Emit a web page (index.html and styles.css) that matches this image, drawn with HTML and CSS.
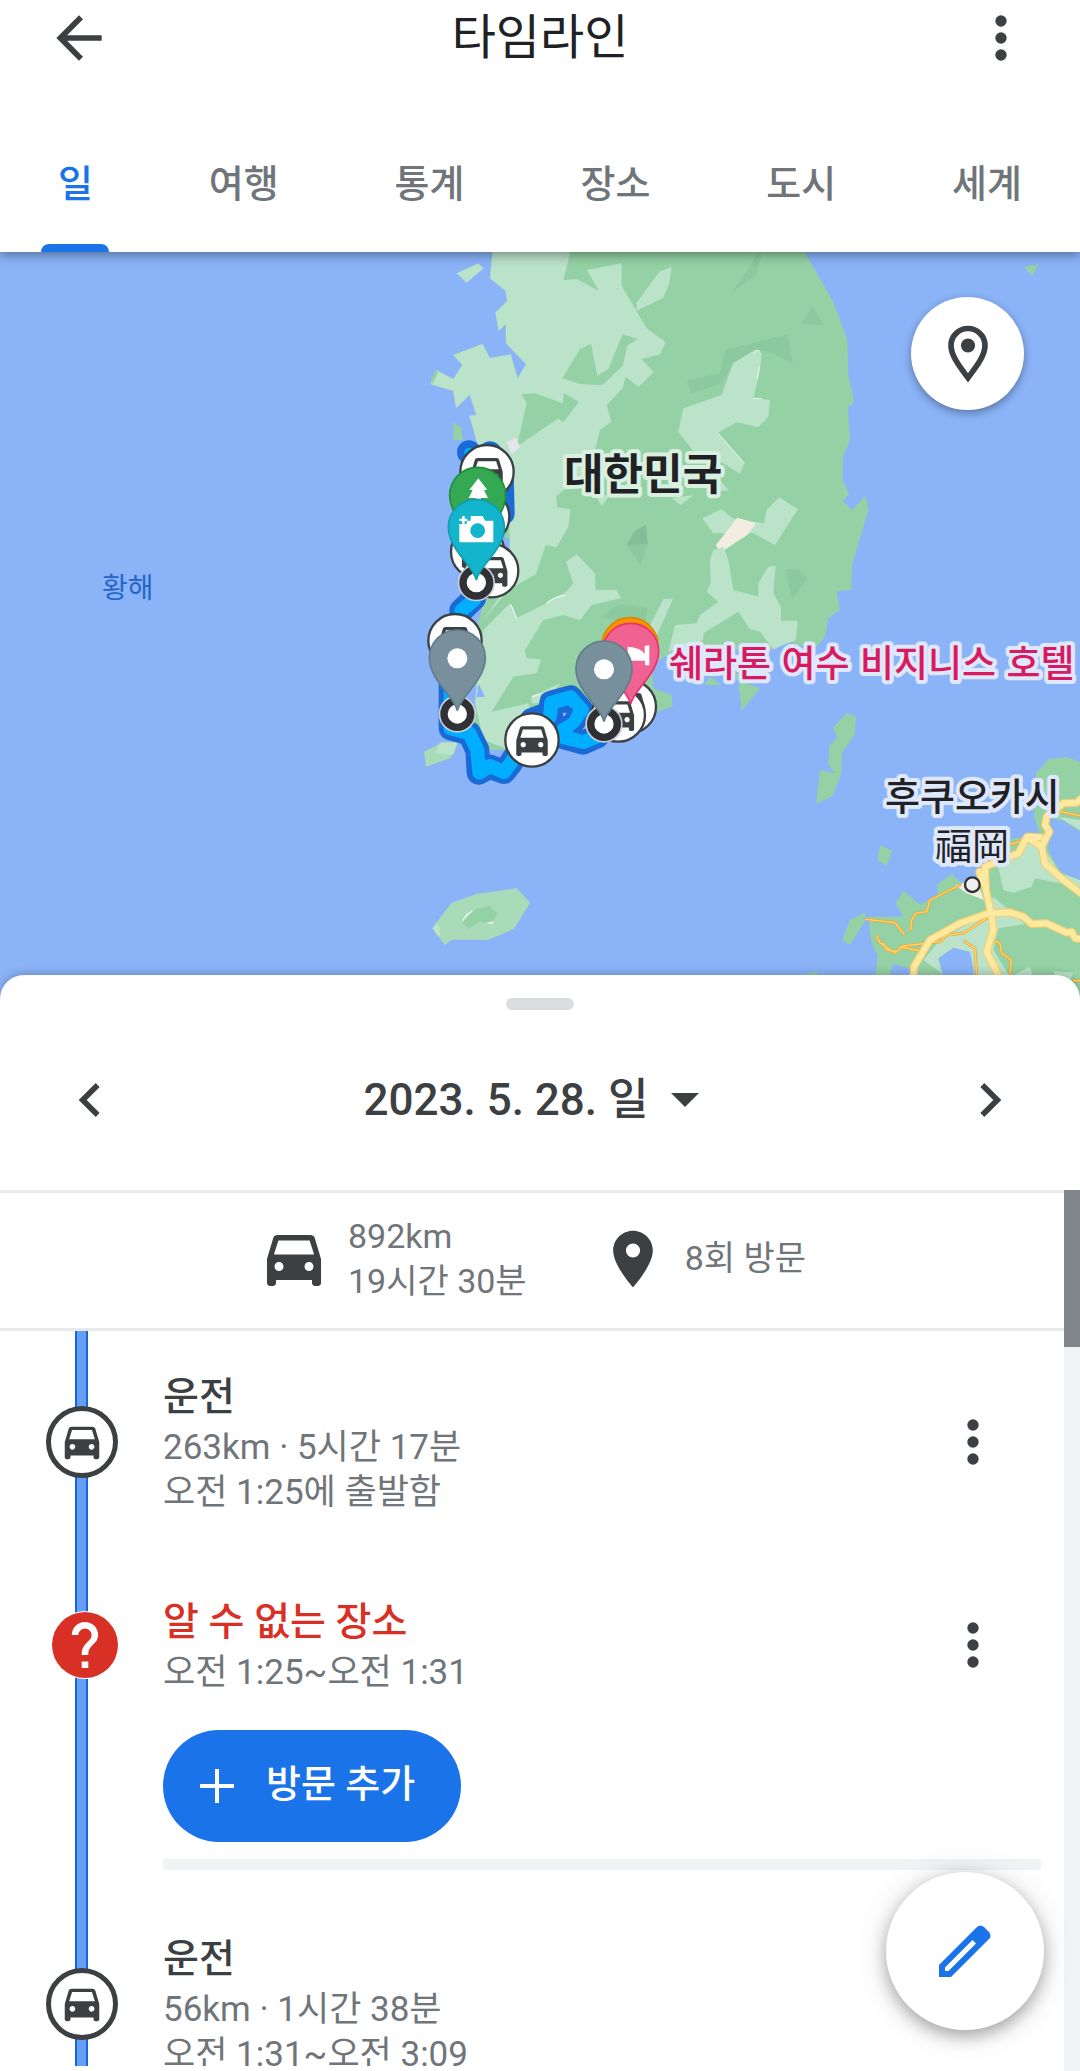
FILE: index.html
```html
<!DOCTYPE html>
<html lang="ko">
<head>
<meta charset="utf-8">
<meta name="viewport" content="width=device-width, initial-scale=1">
<title>타임라인</title>
<link rel="stylesheet" href="styles.css">
</head>
<body>
<svg class="defs" aria-hidden="true">
  <symbol id="car" viewBox="0 0 24 24"><path d="M18.92 5.010C18.720 4.420 18.160 4 17.500 4h-11c-.66 0-1.210.42-1.420 1.010L3 12v8c0 .55.45 1 1 1h1c.55 0 1-.45 1-1v-1h12v1c0 .55.45 1 1 1h1c.55 0 1-.45 1-1v-8zM7 16c-.83 0-1.500-.67-1.500-1.500S6.170 13 7 13s1.500.67 1.500 1.500S7.830 16 7 16zm10 0c-.83 0-1.500-.67-1.500-1.500s.67-1.500 1.500-1.500 1.500.67 1.500 1.500-.67 1.500-1.500 1.500zM5.300 10.500l1.500-4.700h10.400l1.500 4.700z"/></symbol>
  <symbol id="more" viewBox="0 0 24 24"><circle cx="12" cy="6" r="2"/><circle cx="12" cy="12" r="2"/><circle cx="12" cy="18" r="2"/></symbol>
</svg>
<div class="app">
  <header class="top">
    <div class="bar">
      <button class="icon-btn" aria-label="뒤로"><svg class="icon" viewBox="0 0 24 24"><path d="M20 11H7.83l5.59-5.59L12 4l-8 8 8 8 1.41-1.41L7.83 13H20v-2z"/></svg></button>
      <h1 class="title">타임라인</h1>
      <button class="icon-btn" aria-label="메뉴"><svg class="icon"><use href="#more"/></svg></button>
    </div>
    <nav class="tabs">
      <a class="tab tab-on" href="#day">일</a>
      <a class="tab" href="#trips">여행</a>
      <a class="tab" href="#stats">통계</a>
      <a class="tab" href="#places">장소</a>
      <a class="tab" href="#cities">도시</a>
      <a class="tab" href="#world">세계</a>
    </nav>
  </header>

  <section class="map">
    <svg class="map-art" viewBox="0 252 1080 780" preserveAspectRatio="xMidYMin slice">
      <defs>
        <g id="pin"><path d="M0 158C-8 116-84 66-84 0A84 84 0 0 1 84 0C84 66 8 116 0 158z" stroke-width="5"/></g>
        <g id="stop"><circle r="80" fill="#fff" stroke="#3c4043" stroke-width="7"/><use href="#car" x="-63" y="-62" width="126" height="126" fill="#3c4043"/></g>
        <g id="ring"><circle r="56" fill="#c9cfd6"/><circle r="40" fill="#fff" stroke="#303134" stroke-width="22"/></g>
      </defs>
      <rect y="252" width="1080" height="780" fill="#8ab3f8"/>
      <!-- peninsula -->
      <g transform="translate(400 250) scale(.33333)">
        <path fill="#94d2a5" d="M278 0L270 85 316 122 322 152 286 188 296 243 317 222 318 280 378 342 353 386 332 313 270 324 247 282 160 315 187 345 160 387 108 360 92 403 160 423 168 475 209 434 229 495 208 497 235 590 320 700 315 860 330 870 330 960 250 1060 225 1150 215 1290 252 1340 210 1400 200 1460 250 1500 340 1500 400 1420 600 1400 770 1385 818 1370 815 1335 760 1315 755 1245 830 1198 905 1200 930 1280 965 1305 915 1305 960 1230 1010 1290 1080 1315 1025 1382 1015 1290 1000 1200 1120 1198 1170 1170 1185 1185 1250 1190 1275 1160 1285 1105 1320 1080 1310 1023 1355 1020 1356 945 1405 780 1397 738 1356 780 1328 752 1348 732 1327 690 1330 615 1350 572 1344 472 1363 455 1345 375 1342 270 1300 155 1210 0z"/>
        <path fill="#bbe3c9" d="M278 0L512 0 490 90 530 88 597 122 560 60 665 40 665 108 740 235 797 277 780 313 725 327 761 367 715 411 677 380 668 415 620 465 634 515 600 540 585 600 590 690 490 720 468 740 472 772 512 778 505 830 470 892 437 885 408 972 325 1020 250 1110 320 1010 330 870 320 700 235 590 208 497 229 495 209 434 168 475 160 423 92 403 108 360 160 387 187 345 160 315 247 282 270 324 332 313 353 386 378 342 318 280 317 222 296 243 286 188 322 152 316 122 270 85zM815 50L808 100 790 143 710 182 710 158 778 65zM1068 298L1000 338 965 435 850 475 835 545 885 610 970 640 1020 671 1033 640 953 548 1010 517 1075 532 1105 500 1110 450 1060 445 1075 385 1085 320zM585 735L630 735 605 767zM815 745L880 735 842 765zM960 690L987 722 950 722zM907 805L965 778 998 805 1092 820 1100 780 1138 742 1193 778 1125 885 1060 850 940 850zM170 70L235 40 250 55 200 98z"/>
        <path fill="#94d2a5" d="M487 385L540 297 573 281 592 377 625 358 668 252 715 268 683 285 668 348 607 406 540 402zM365 433L405 430 488 460 492 430 537 455 490 517 475 505 350 590 380 460zM160 517L185 535 188 570 160 570zM108 360L92 390 98 402 115 365z"/>
        <path fill="#8bc99e" d="M1238 165L1270 227 1205 220zM860 392L960 370 975 300 1163 253 1178 343 1120 310 1068 298 1000 338 965 400 875 430zM1085 10L1070 75 995 127 1050 50 1070 10zM1158 957L1195 957 1223 987 1175 1048zM680 885L743 882 722 945zM600 1100L660 1062 742 1075 735 1130z"/>
        <path fill="#83be98" d="M738 823L743 882 680 885 705 842z"/>
        <path fill="#f2ede0" d="M1012 803L1068 820 1042 855 960 908 948 885z"/>
        <path fill="#e4e4ea" d="M320 575L350 563 360 592 335 612z"/>
        <path fill="none" stroke="#eef5ef" stroke-width="3" d="M953 548L1033 640M1060 310L1075 300 1083 315M1060 445L1085 446M1078 350L1072 385"/>
      </g>
      <g transform="translate(520 560) scale(.33333)" fill="#bbe3c9">
        <path d="M570 0L580-30 610-40 625 0 640 90 715 110 715 70 745 20 767 18 760 100 783 140 783 182 833 182 828 240 760 268 720 215 690 208 655 155 550 220 550 240 445 275 465 195 530 190 540 165 595 125 560 95 572 70zM430 118L460 115 400 250 380 215z"/>
      </g>
      <g transform="translate(400 420) scale(.33333)">
        <path fill="#bbe3c9" d="M250 630L330 550 350 595 440 550 490 525 520 490 498 425 530 403 585 460 587 510 650 510 663 535 575 555 540 600 490 585 430 600 375 690 380 715 423 718 410 760 340 770 275 875 385 850 400 900 330 990 250 960 225 850 240 700zM395 830L480 790 440 850 395 850z"/>
        <path fill="#a9dbb8" d="M72 995L130 965 175 965 150 1015 78 1040z"/>
        <path fill="#bbe3c9" d="M120 968L172 968 160 1005 105 1000z"/>
        <path fill="#8ab3f8" d="M235 790L255 830 230 832z"/>
        <path fill="none" stroke="#eef5ef" stroke-width="4" d="M333 555L350 595M440 550Q465 530 495 525M395 830L420 822"/>
      </g>
      <!-- islands -->
      <path fill="#94d2a5" d="M1024 267L1039 264 1032 276z"/>
      <g transform="translate(400 780) scale(.33333)">
        <path fill="#a9dbb8" d="M97 445L155 368 230 342 350 325 390 368 342 447 265 479 155 479 135 495z"/>
        <path fill="#bbe3c9" d="M97 445L110 428 120 440 120 465 113 468z"/>
        <path fill="#94d2a5" d="M187 428L220 390 268 377 293 400 275 432 240 425 205 447z"/>
        <path fill="#eef5ef" d="M185 428Q195 395 225 390 205 400 185 428zM255 430L278 432 280 424z"/>
      </g>
      <!-- kyushu -->
      <g transform="translate(780 650) scale(.33333)">
        <path fill="#94d2a5" d="M200 190L228 198 224 255 187 305 183 373 158 437 108 463 120 360 165 370 145 345 148 288 172 262 158 235zM300 585L337 603 320 648 293 630zM255 787L257 810 210 885 187 870 210 810zM900 335L858 320 805 328 768 370 762 500 780 555 700 565 620 640 600 690 545 700 515 672 470 705 475 740 418 762 370 722 347 760 370 800 265 800 275 880 293 915 285 1000 700 1000 900 1120zM75 973L113 964 105 985z"/>
        <path fill="#bbe3c9" d="M655 650L740 580 790 590 840 670 900 690 900 712 765 685 755 710 700 728 670 720zM430 930L480 870 620 790 640 740 735 822 655 835 640 900 690 980 500 980zM700 975L750 950 760 980zM820 963L880 968 870 990 830 985zM835 500L900 510 900 540z"/>
        <path fill="#f2ede0" d="M525 705L590 690 612 750 560 730z"/>
        <path fill="#8ab3f8" d="M810 505L850 512 900 545 900 690 840 665 805 600zM475 925L520 893 570 905 585 980 490 980zM340 940L385 955 410 980 330 975z"/>
        <g fill="none" stroke-linejoin="round" stroke-linecap="round">
          <path stroke="#eba93a" stroke-width="9" d="M540 705L450 750 440 785 408 790 395 810 392 840M260 808L345 818 372 852M290 858L300 878 345 910 370 888 480 875 500 855 550 850 620 805M310 880L320 900 350 905M360 890L420 903M555 875L585 895 590 975M640 870L660 880 665 910 693 930 690 980M660 590L780 560M840 485L900 497M880 992H900"/>
          <path stroke="#fcd770" stroke-width="4" d="M540 705L450 750 440 785 408 790 395 810 392 840M260 808L345 818 372 852M290 858L300 878 345 910 370 888 480 875 500 855 550 850 620 805M310 880L320 900 350 905M360 890L420 903M555 875L585 895 590 975M640 870L660 880 665 910 693 930 690 980M660 590L780 560M840 485L900 497M880 992H900"/>
          <path stroke="#f7cf72" stroke-width="24" d="M910 440L890 458 850 460 800 500 795 525 808 545 785 590 795 640 850 690 910 735M785 590L740 562 715 610 640 640 615 650 618 720 635 800 640 840 620 905 665 995M780 562L745 560M598 665L610 700M400 985L402 950 450 870 540 820 625 790 690 787 730 800 755 822 800 820 860 848 875 845 885 865 910 868"/>
          <path stroke="#fde9a0" stroke-width="17" d="M910 440L890 458 850 460 800 500 795 525 808 545 785 590 795 640 850 690 910 735M785 590L740 562 715 610 640 640 615 650 618 720 635 800 640 840 620 905 665 995M780 562L745 560M598 665L610 700M400 985L402 950 450 870 540 820 625 790 690 787 730 800 755 822 800 820 860 848 875 845 885 865 910 868"/>
        </g>
        <circle cx="577" cy="704" r="22" fill="#eee" stroke="#303134" stroke-width="7"/>
      </g>
      <!-- route and stops -->
      <g transform="translate(400 420) scale(.33333)">
        <g fill="none" stroke-linecap="round" stroke-linejoin="round">
          <path stroke="#1a6ad6" stroke-width="72" d="M207 97L208 98M270 100L305 160 308 280M222 535L184 572M152 780V925L208 940 232 990 236 1058 270 1040 312 1056 332 1030 345 1010M395 900L450 880 454 848 512 832 545 870 520 905 490 930 485 950 550 968 590 950 610 930"/>
          <path stroke="#00aeff" stroke-width="42" d="M222 540L184 572M152 780V925L208 940 232 990 238 1058 270 1038 312 1056 332 1030 345 1010M450 890L454 848 512 832 545 870 520 905 490 930 485 950 550 966 590 950 610 930"/>
          <path stroke="#00aeff" stroke-width="28" d="M207 97L208 98"/>
        </g>
        <path fill="#8ab3f8" stroke="#1a6ad6" stroke-width="14" stroke-linejoin="round" d="M482 872L512 870 502 890 482 902z"/>
        <use href="#stop" x="248" y="290"/><use href="#stop" x="261" y="155"/>
        <use href="#stop" x="233" y="395"/><use href="#stop" x="275" y="452"/>
        <use href="#stop" x="165" y="662"/><use href="#stop" x="396" y="960"/>
        <use href="#stop" x="688" y="860"/><use href="#stop" x="655" y="885"/>
        <use href="#ring" x="229" y="488"/><use href="#ring" x="172" y="882"/><use href="#ring" x="612" y="912"/>
        <use href="#pin" x="233" y="226" fill="#34a853" stroke="#1e8e3e"/>
        <path fill="#fff" d="M235 175L262 210H252L264 234H243V250H227V234H206L218 210H208z"/>
        <use href="#pin" x="229" y="322" fill="#12b5cb" stroke="#129eaf"/>
        <path fill="#fff" fill-rule="evenodd" d="M212 302V288H248L255 302H280V367H178V312H200V302zM233 310a22 22 0 1 0 .1 0zM186 288H194V296H202V303H194V311H186V303H178V296H186z"/>
        <use href="#pin" x="690" y="677" fill="#fa9300" stroke="#e08600"/>
        <use href="#pin" x="692" y="694" fill="#f06292" stroke="#e8316e"/>
        <path fill="#fff" d="M683 680Q722 682 734 702V678L748 675V736H735V722H683z"/>
        <use href="#pin" x="172" y="714" fill="#78909c" stroke="#607d8b"/><circle cx="172" cy="715" r="30" fill="#fff"/>
        <use href="#pin" x="612" y="747" fill="#78909c" stroke="#607d8b"/><circle cx="612" cy="748" r="30" fill="#fff"/>
      </g>
      <g class="labels">
        <text class="label label-country" x="564" y="490">대한민국</text>
        <text class="label-sea" x="102" y="598">황해</text>
        <text class="label label-hotel" x="669" y="677">쉐라톤 여수 비지니스 호텔</text>
        <text class="label label-city" x="885" y="810">후쿠오카시</text>
        <text class="label label-cjk" x="935" y="860">福岡</text>
      </g>
    </svg>
    <button class="locate" aria-label="내 위치">
      <svg class="locate-icon" viewBox="0 0 24 24"><path fill="none" stroke="currentColor" stroke-width="2" d="M12 20.400C9 16.400 6 12.600 6 9a6 6 0 0 1 12 0c0 3.600-3 7.400-6 11.400z"/><circle cx="12" cy="9" r="2.500"/></svg>
    </button>
  </section>

  <main class="sheet">
    <div class="handle"></div>
    <div class="date-row">
      <button class="icon-btn" aria-label="이전 날짜"><svg class="icon" viewBox="0 0 24 24"><path d="M15.410 7.410L14 6l-6 6 6 6 1.410-1.410L10.830 12z"/></svg></button>
      <button class="date">2023. 5. 28. 일 <svg class="caret" viewBox="0 0 28 14"><path d="M0 0h28L14 14z"/></svg></button>
      <button class="icon-btn" aria-label="다음 날짜"><svg class="icon" viewBox="0 0 24 24"><path d="M10 6L8.590 7.410 13.170 12l-4.580 4.590L10 18l6-6z"/></svg></button>
    </div>
    <div class="scroller">
      <div class="content">
        <div class="summary">
          <div class="stat"><svg class="stat-icon"><use href="#car"/></svg><p class="total">892km<br>19시간 30분</p></div>
          <div class="stat"><svg class="stat-icon stat-pin" viewBox="0 0 24 24"><path d="M12 2C8.130 2 5 5.130 5 9c0 5.250 7 13 7 13s7-7.750 7-13c0-3.870-3.130-7-7-7zm0 9.500a2.500 2.500 0 1 1 0-5 2.500 2.500 0 0 1 0 5z"/></svg><p class="total">8회 방문</p></div>
        </div>
        <ul class="list">
          <li class="entry">
            <div class="entry-head">
              <span class="node"><svg class="node-icon"><use href="#car"/></svg></span>
              <div><h2 class="name">운전</h2><p class="sub">263km · 5시간 17분<br>오전 1:25에 출발함</p></div>
              <button class="icon-btn" aria-label="더보기"><svg class="icon"><use href="#more"/></svg></button>
            </div>
          </li>
          <li class="entry entry-place">
            <div class="entry-head">
              <span class="node node-unknown"><svg class="help" viewBox="2 2 20 20"><path d="M13 19h-2v-2h2v2zm2.070-7.750l-.9.920C13.450 12.900 13 13.500 13 15h-2v-.5c0-1.100.45-2.100 1.170-2.830l1.240-1.260c.37-.36.59-.86.59-1.410 0-1.100-.9-2-2-2s-2 .9-2 2H8c0-2.210 1.790-4 4-4s4 1.790 4 4c0 .88-.36 1.680-.93 2.250z"/></svg></span>
              <div><h2 class="name name-unknown">알 수 없는 장소</h2><p class="sub">오전 1:25~오전 1:31</p></div>
              <button class="icon-btn" aria-label="더보기"><svg class="icon"><use href="#more"/></svg></button>
            </div>
            <button class="add"><svg class="add-icon" viewBox="0 0 34 34"><path d="M15 0h4v15h15v4H19v15h-4V19H0v-4h15z"/></svg>방문 추가</button>
          </li>
          <li class="entry">
            <div class="entry-head">
              <span class="node"><svg class="node-icon"><use href="#car"/></svg></span>
              <div><h2 class="name">운전</h2><p class="sub">56km · 1시간 38분<br>오전 1:31~오전 3:09</p></div>
            </div>
          </li>
        </ul>
      </div>
      <div class="track"><div class="thumb"></div></div>
    </div>
    <button class="fab" aria-label="수정"><svg class="fab-icon" viewBox="0 0 52 52"><path fill-rule="evenodd" d="M0 40L38 2Q41-1 45 2L50 7Q53 11 50 14L12 52H0zM6 42.500V46H9.500L37 18.500 33.500 15z"/></svg></button>
  </main>
</div>
</body>
</html>
```
FILE: styles.css
```css
* { box-sizing: border-box; }
body, h1, h2, p, ul { margin: 0; padding: 0; }
body {
  font-family: Roboto, "Noto Sans CJK KR", sans-serif;
  color: #3c4043;
  background: #fff;
}
button { border: 0; padding: 0; background: none; font: inherit; color: inherit; cursor: pointer; }
a { color: inherit; text-decoration: none; }
ul { list-style: none; }
svg { display: block; fill: currentColor; }
.defs { position: absolute; width: 0; height: 0; }

.app { display: flex; flex-direction: column; height: 100vh; overflow: hidden; }

.top { position: relative; z-index: 1; background: #fff; box-shadow: 0 2px 12px rgba(0, 0, 0, .45); }
.bar { display: flex; align-items: center; justify-content: space-between; height: 76px; padding: 0 45px; }
.icon-btn { display: flex; }
.icon { width: 68px; height: 68px; }
.title { font-size: 48px; font-weight: 400; line-height: 76px; color: #202124; }
.tabs { display: flex; justify-content: space-around; height: 176px; padding-top: 70px; font-size: 38px; font-weight: 500; line-height: 76px; color: #70757a; }
.tab { position: relative; }
.tab-on { color: #1a73e8; }
.tab-on::after {
  content: "";
  position: absolute;
  left: 50%;
  bottom: 0;
  width: 68px;
  height: 8px;
  margin-left: -34px;
  border-radius: 8px 8px 0 0;
  background: #1a73e8;
}

.map { position: relative; height: 780px; flex: none; }
.map-art { width: 100%; height: 100%; }
.labels { font-family: "Noto Sans CJK KR", sans-serif; }
.label { paint-order: stroke; stroke: #dfe8fb; stroke-width: 8px; stroke-linejoin: round; }
.label-country { font-size: 43px; font-weight: 700; fill: #202124; stroke: #d9f0e0; }
.label-sea { font-size: 28px; fill: #2566c8; }
.label-hotel { font-size: 37px; font-weight: 500; fill: #d81b60; }
.label-city { font-size: 38px; font-weight: 500; fill: #202124; }
.label-cjk { font-size: 37px; fill: #202124; }
.locate {
  position: absolute;
  top: 45px;
  right: 56px;
  display: grid;
  place-items: center;
  width: 113px;
  height: 113px;
  border-radius: 50%;
  background: #fff;
  box-shadow: 0 3px 8px rgba(0, 0, 0, .35);
}
.locate-icon { width: 68px; height: 68px; }

.sheet {
  position: relative;
  z-index: 1;
  flex: 1;
  min-height: 0;
  display: flex;
  flex-direction: column;
  margin-top: -57px;
  padding-bottom: 5px;
  border-radius: 24px 24px 0 0;
  background: #fff;
  box-shadow: 0 -2px 8px rgba(0, 0, 0, .2);
}
.handle { width: 68px; height: 12px; margin: 23px auto 0; border-radius: 6px; background: #dadce0; }
.date-row { display: flex; align-items: center; justify-content: space-between; height: 180px; padding: 0 56px; }
.date { display: flex; align-items: center; gap: 22px; margin-right: 18px; font-size: 44px; font-weight: 500; line-height: 64px; }
.caret { width: 28px; height: 14px; }

.scroller { flex: 1; min-height: 0; display: flex; }
.content { flex: 1; min-width: 0; overflow: hidden; }
.track { width: 16px; margin-bottom: -5px; background: #f1f3f4; }
.thumb { height: 157px; background: #80868b; }
.summary { display: flex; align-items: center; justify-content: center; gap: 72px; height: 141px; padding-bottom: 4px; border-top: 3px solid #e8eaed; border-bottom: 3px solid #e8eaed; }
.stat { display: flex; align-items: center; gap: 18px; }
.stat-icon { width: 72px; height: 72px; }
.stat-pin { width: 68px; height: 68px; }
.total { font-size: 34px; line-height: 45px; color: #70757a; }
.sub { font-size: 35px; line-height: 45px; color: #70757a; }

.list {
  min-height: 100%;
  background: linear-gradient(90deg, #1967d2 2px, #669df6 2px 11px, #1967d2 11px) 75px 0 / 13px 100% no-repeat;
}
.entry { padding: 38px 0 41px; }
.entry-head { display: grid; grid-template-columns: 118px 1fr auto; column-gap: 45px; align-items: center; padding-right: 57px; }
.node { justify-self: end; display: grid; place-items: center; width: 72px; height: 72px; border: 5px solid #3c4043; border-radius: 50%; background: #fff; }
.node-icon { width: 46px; height: 46px; }
.node-unknown { width: 66px; height: 66px; border: 0; background: #d93025; color: #fff; box-shadow: 0 0 0 1px #fff; }
.help { width: 66px; height: 66px; }
.name { font-size: 39px; font-weight: 500; line-height: 56px; }
.name-unknown { color: #d93025; }
.entry-place { margin-bottom: 23px; padding-bottom: 0; }
.entry-place::after { content: ""; display: block; height: 11px; margin: 17px 23px 0 163px; background: #f1f3f4; }
.add {
  display: flex;
  align-items: center;
  gap: 32px;
  height: 112px;
  margin: 35px 0 0 163px;
  padding: 0 46px 0 37px;
  border-radius: 56px;
  background: #1a73e8;
  color: #fff;
  font-size: 38px;
  font-weight: 500;
  line-height: 56px;
  padding-bottom: 4px;
}
.add-icon { width: 34px; height: 34px; margin-top: 4px; }
.fab {
  position: absolute;
  right: 36px;
  bottom: 41px;
  display: grid;
  place-items: center;
  width: 158px;
  height: 158px;
  border-radius: 50%;
  background: #fff;
  color: #1a73e8;
  box-shadow: 0 6px 16px rgba(0, 0, 0, .3), 0 2px 36px rgba(0, 0, 0, .12);
}
.fab-icon { width: 52px; height: 52px; }
```
